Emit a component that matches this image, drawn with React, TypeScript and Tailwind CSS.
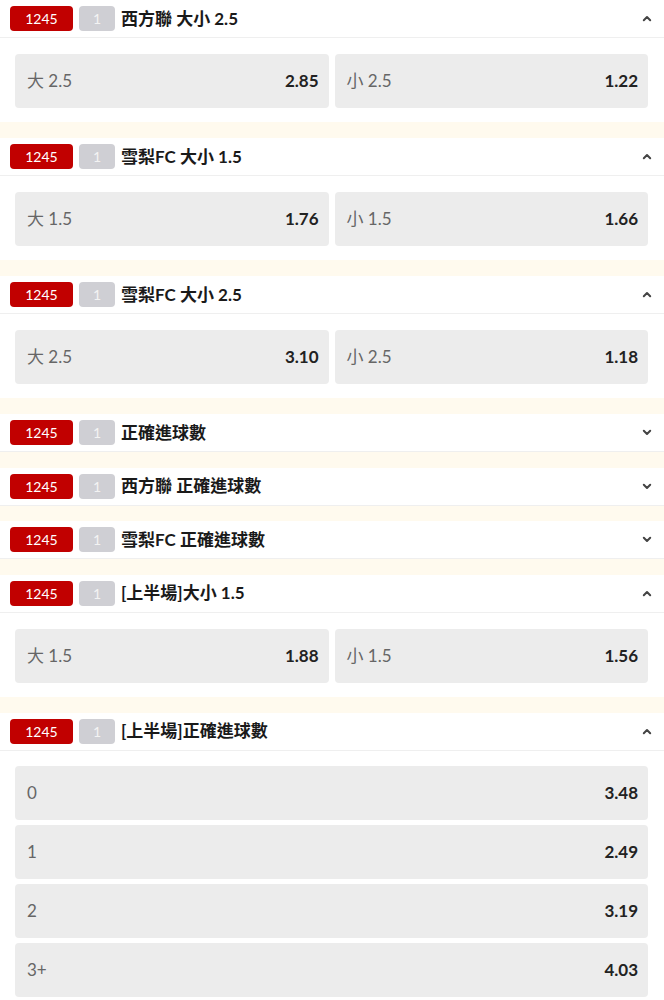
import React from 'react'

type Opt = { label: string; odds: string }
type Market = { title: string; open: boolean; layout?: 'pair' | 'list'; options?: Opt[] }

const markets: Market[] = [
  { title: '西方聯 大小 2.5', open: true, layout: 'pair', options: [{ label: '大 2.5', odds: '2.85' }, { label: '小 2.5', odds: '1.22' }] },
  { title: '雪梨FC 大小 1.5', open: true, layout: 'pair', options: [{ label: '大 1.5', odds: '1.76' }, { label: '小 1.5', odds: '1.66' }] },
  { title: '雪梨FC 大小 2.5', open: true, layout: 'pair', options: [{ label: '大 2.5', odds: '3.10' }, { label: '小 2.5', odds: '1.18' }] },
  { title: '正確進球數', open: false },
  { title: '西方聯 正確進球數', open: false },
  { title: '雪梨FC 正確進球數', open: false },
  { title: '[上半場]大小 1.5', open: true, layout: 'pair', options: [{ label: '大 1.5', odds: '1.88' }, { label: '小 1.5', odds: '1.56' }] },
  {
    title: '[上半場]正確進球數',
    open: true,
    layout: 'list',
    options: [
      { label: '0', odds: '3.48' },
      { label: '1', odds: '2.49' },
      { label: '2', odds: '3.19' },
      { label: '3+', odds: '4.03' },
    ],
  },
]

function Chevron({ up }: { up: boolean }) {
  return (
    <svg width="10" height="7" viewBox="0 0 10 7" className="text-[#444]">
      <path
        d={up ? 'M1.8 5.2 L5 2 L8.2 5.2' : 'M1.8 1.8 L5 5 L8.2 1.8'}
        fill="none"
        stroke="currentColor"
        strokeWidth="2"
        strokeLinecap="round"
        strokeLinejoin="round"
      />
    </svg>
  )
}

function OddsCard({ opt }: { opt: Opt }) {
  return (
    <div className="h-[54px] rounded-[4px] bg-[#ececec] flex items-center justify-between pl-3 pr-[10px]">
      <span className="text-[17px] text-[#666]">{opt.label}</span>
      <span className="text-[17px] font-bold text-[#222]">{opt.odds}</span>
    </div>
  )
}

function MarketBlock({ m }: { m: Market }) {
  return (
    <div className="bg-white">
      <div className="h-[38px] flex items-center pl-[10px] pr-[12px] border-b border-[#efefef]">
        <div className="w-[63px] h-[25px] rounded-[4px] bg-[#c10000] text-white text-[14px] flex items-center justify-center">
          1245
        </div>
        <div className="w-[36px] h-[25px] ml-[6px] rounded-[4px] bg-[#cfcfd4] text-[#f3f3f3] text-[14px] flex items-center justify-center">
          1
        </div>
        <div className="ml-[6px] text-[17px] font-bold text-[#1a1a1a] flex-1">{m.title}</div>
        <Chevron up={m.open} />
      </div>
      {m.open && m.layout === 'pair' && (
        <div className="grid grid-cols-2 gap-[6px] pl-[15px] pr-[16px] pt-4 pb-[14px]">
          {m.options!.map((o, i) => (
            <OddsCard key={i} opt={o} />
          ))}
        </div>
      )}
      {m.open && m.layout === 'list' && (
        <div className="flex flex-col gap-[5px] pl-[15px] pr-[16px] pt-[15px] pb-[14px]">
          {m.options!.map((o, i) => (
            <OddsCard key={i} opt={o} />
          ))}
        </div>
      )}
    </div>
  )
}

export default function App() {
  return (
    <div
      className="w-[664px] min-h-screen bg-white"
      style={{ fontFamily: 'Lato, "Noto Sans CJK TC", sans-serif' }}
    >
      {markets.map((m, i) => (
        <div key={i}>
          {i > 0 && (
            <div className={markets[i - 1].open ? 'h-4 bg-[#fffaee]' : 'h-[15.5px] bg-[#fffaee]'} />
          )}
          <MarketBlock m={m} />
        </div>
      ))}
    </div>
  )
}
